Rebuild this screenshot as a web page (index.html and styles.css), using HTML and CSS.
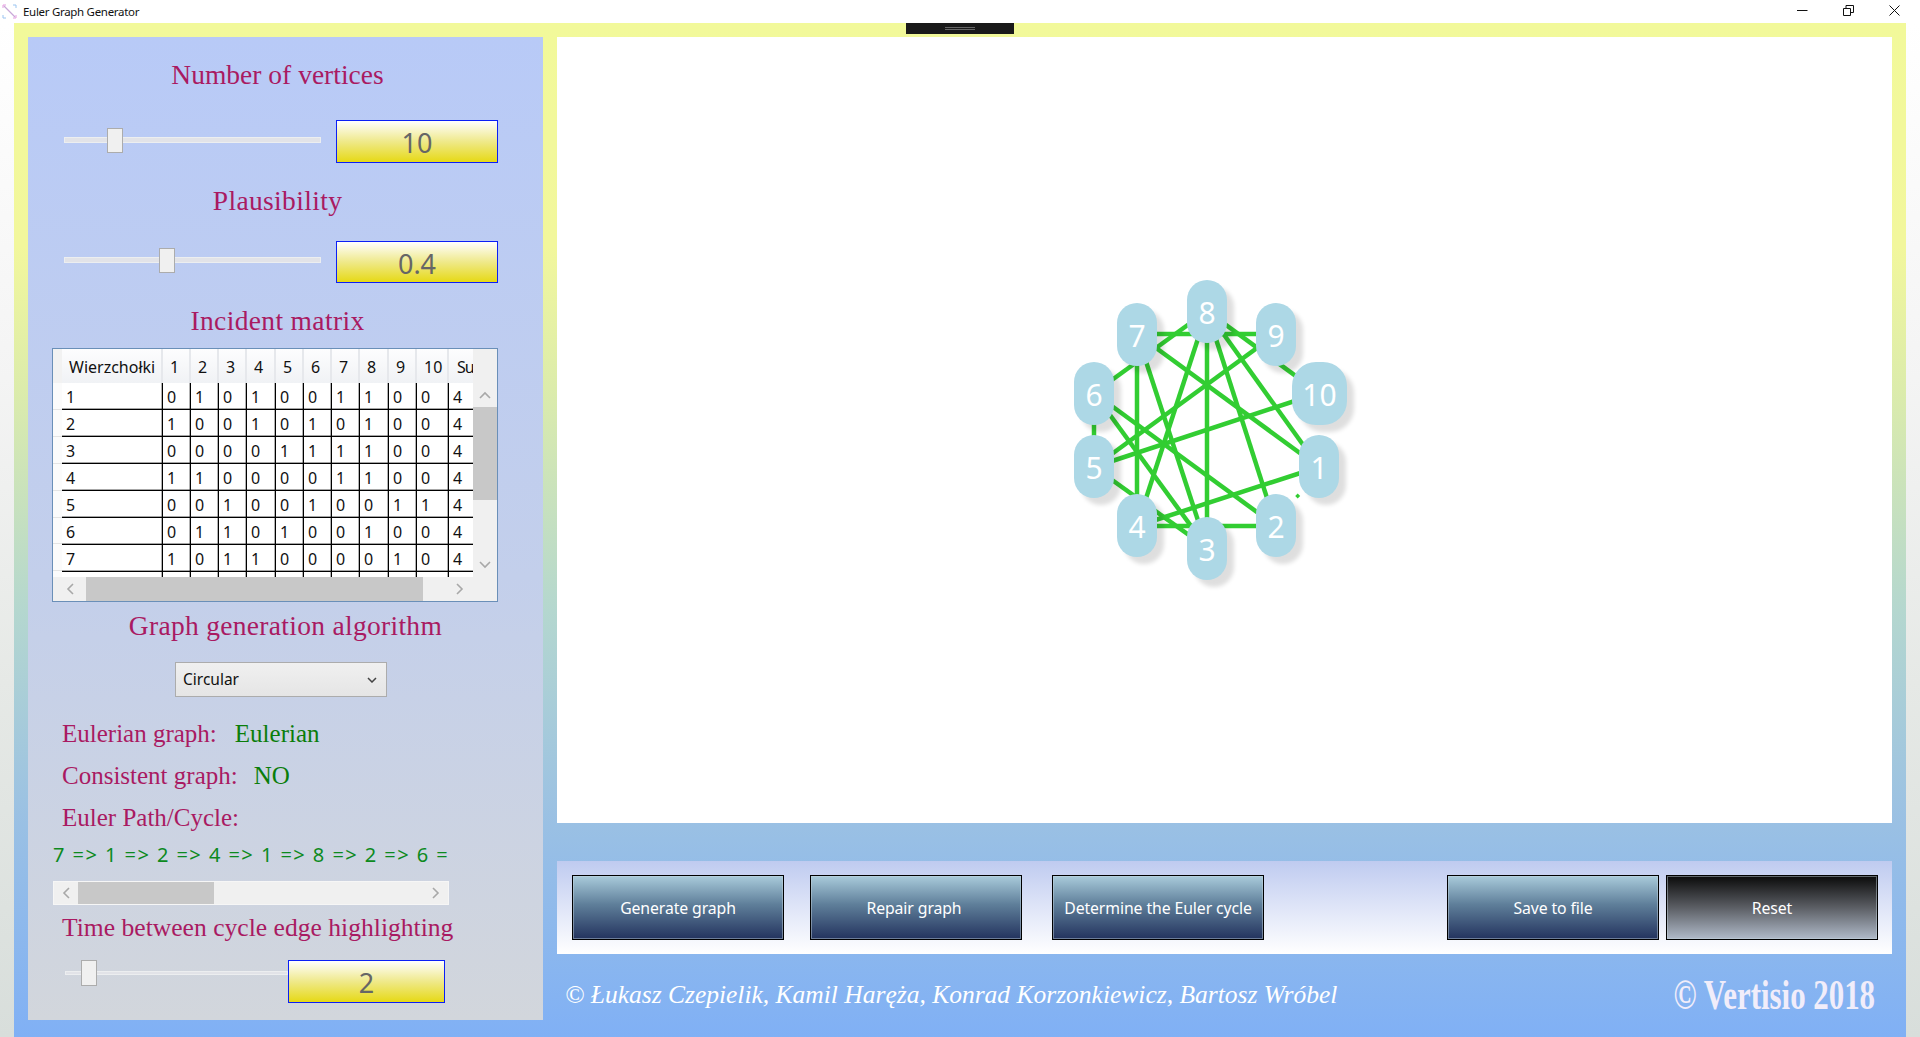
FILE: index.html
```html
<!DOCTYPE html>
<html lang="en">
<head>
<meta charset="utf-8">
<title>Euler Graph Generator</title>
<link rel="stylesheet" href="styles.css">
</head>
<body>
<header class="titlebar">
  <svg class="app-icon" viewBox="0 0 15 15"><path d="M1 1h3M1 1v3M14 14h-3M14 14v-3" stroke="#e59be0" fill="none"/><path d="M1 11v3h3M11 1h3v3" stroke="#9ac4f0" fill="none"/><path d="M2 2l11 11" stroke="#c8a8d8" stroke-width="1.2"/></svg>
  <span class="app-title">Euler Graph Generator</span>
  <div class="win-controls">
    <svg class="win-btn" viewBox="0 0 11 11"><path d="M0 5.5h10.500" stroke="#111"/></svg>
    <svg class="win-btn" viewBox="0 0 11 11"><path d="M.5 3.500h7v7h-7zM3 3.500v-3h7.500v7h-3" stroke="#111" fill="none"/></svg>
    <svg class="win-btn" viewBox="0 0 11 11"><path d="M.5.5l10 10M10.500.5l-10 10" stroke="#111"/></svg>
  </div>
</header>
<div class="window">
  <div class="strip"></div>
  <div class="stage">
    <div class="grab"><span class="grab-lines"></span></div>
    <aside class="panel">
      <h2 class="heading h-first">Number of vertices</h2>
      <div class="slider-row r-first">
        <div class="track"><span class="thumb t-vertices"></span></div>
        <div class="value">10</div>
      </div>
      <h2 class="heading h-next">Plausibility</h2>
      <div class="slider-row r-second">
        <div class="track"><span class="thumb t-plaus"></span></div>
        <div class="value">0.4</div>
      </div>
      <h2 class="heading h-next h-wide">Incident matrix</h2>
      <div class="grid-box">
        <div class="grid-top">
          <div class="row-strip"></div>
          <div class="grid-clip">
            <table class="matrix">
              <colgroup><col class="c-name"><col class="c-a"><col class="c-a"><col class="c-a"><col class="c-b"><col class="c-a"><col class="c-a"><col class="c-a"><col class="c-b"><col class="c-a"><col class="c-ten"><col class="c-sum"></colgroup>
              <thead><tr><th>Wierzchołki</th><th>1</th><th>2</th><th>3</th><th>4</th><th>5</th><th>6</th><th>7</th><th>8</th><th>9</th><th>10</th><th>Su</th></tr></thead>
              <tbody>
                <tr><td>1</td><td>0</td><td>1</td><td>0</td><td>1</td><td>0</td><td>0</td><td>1</td><td>1</td><td>0</td><td>0</td><td>4</td></tr>
                <tr><td>2</td><td>1</td><td>0</td><td>0</td><td>1</td><td>0</td><td>1</td><td>0</td><td>1</td><td>0</td><td>0</td><td>4</td></tr>
                <tr><td>3</td><td>0</td><td>0</td><td>0</td><td>0</td><td>1</td><td>1</td><td>1</td><td>1</td><td>0</td><td>0</td><td>4</td></tr>
                <tr><td>4</td><td>1</td><td>1</td><td>0</td><td>0</td><td>0</td><td>0</td><td>1</td><td>1</td><td>0</td><td>0</td><td>4</td></tr>
                <tr><td>5</td><td>0</td><td>0</td><td>1</td><td>0</td><td>0</td><td>1</td><td>0</td><td>0</td><td>1</td><td>1</td><td>4</td></tr>
                <tr><td>6</td><td>0</td><td>1</td><td>1</td><td>0</td><td>1</td><td>0</td><td>0</td><td>1</td><td>0</td><td>0</td><td>4</td></tr>
                <tr><td>7</td><td>1</td><td>0</td><td>1</td><td>1</td><td>0</td><td>0</td><td>0</td><td>0</td><td>1</td><td>0</td><td>4</td></tr>
                <tr><td></td><td></td><td></td><td></td><td></td><td></td><td></td><td></td><td></td><td></td><td></td><td></td></tr>
              </tbody>
            </table>
          </div>
          <div class="vbar">
            <div class="vbar-head"></div>
            <div class="vbar-btn"><svg class="chev" viewBox="0 0 12 8"><path d="M1 7l5-5 5 5"/></svg></div>
            <div class="vbar-thumb"></div>
            <div class="vbar-rest"></div>
            <div class="vbar-btn"><svg class="chev" viewBox="0 0 12 8"><path d="M1 1l5 5 5-5"/></svg></div>
          </div>
        </div>
        <div class="hbar hbar-grid">
          <div class="hbar-btn"><svg class="chev-h" viewBox="0 0 8 12"><path d="M7 1L2 6l5 5"/></svg></div>
          <div class="hbar-thumb th-grid"></div>
          <div class="hbar-rest"></div>
          <div class="hbar-btn"><svg class="chev-h" viewBox="0 0 8 12"><path d="M1 1l5 5-5 5"/></svg></div>
          <div class="hbar-corner"></div>
        </div>
      </div>
      <h2 class="heading h-algo">Graph generation algorithm</h2>
      <div class="select">
        <span>Circular</span>
        <svg class="sel-chev" viewBox="0 0 10 6"><path d="M1 1l4 4 4-4"/></svg>
      </div>
      <p class="status s-first"><span class="label">Eulerian graph:</span><span class="answer">Eulerian</span></p>
      <p class="status s-next"><span class="label">Consistent graph:</span><span class="answer a-no">NO</span></p>
      <p class="status s-next"><span class="label">Euler Path/Cycle:</span></p>
      <div class="path-clip">7 =&gt; 1 =&gt; 2 =&gt; 4 =&gt; 1 =&gt; 8 =&gt; 2 =&gt; 6 =</div>
      <div class="hbar hbar-path">
        <div class="hbar-btn"><svg class="chev-h" viewBox="0 0 8 12"><path d="M7 1L2 6l5 5"/></svg></div>
        <div class="hbar-thumb th-path"></div>
        <div class="hbar-rest"></div>
        <div class="hbar-btn"><svg class="chev-h" viewBox="0 0 8 12"><path d="M1 1l5 5-5 5"/></svg></div>
      </div>
      <h2 class="heading h-time">Time between cycle edge highlighting</h2>
      <div class="slider-row r-time">
        <div class="track thin"><span class="thumb t-time"></span></div>
        <div class="value v-time">2</div>
      </div>
    </aside>
    <main class="workspace">
      <section class="canvas">
        <svg class="edges" viewBox="0 0 1335 786">
          <line x1="580" y1="297" x2="719" y2="297"/>
          <line x1="650" y1="274" x2="537" y2="356"/>
          <line x1="580" y1="297" x2="762" y2="430"/>
          <line x1="650" y1="274" x2="762" y2="430"/>
          <line x1="650" y1="274" x2="719" y2="489"/>
          <line x1="650" y1="274" x2="650" y2="511"/>
          <line x1="650" y1="274" x2="580" y2="489"/>
          <line x1="719" y1="297" x2="537" y2="430"/>
          <line x1="762" y1="356" x2="537" y2="430"/>
          <line x1="580" y1="297" x2="650" y2="511"/>
          <line x1="580" y1="297" x2="580" y2="489"/>
          <line x1="537" y1="356" x2="719" y2="489"/>
          <line x1="537" y1="356" x2="650" y2="511"/>
          <line x1="537" y1="356" x2="537" y2="430"/>
          <line x1="537" y1="430" x2="650" y2="511"/>
          <line x1="762" y1="430" x2="580" y2="489"/>
          <line x1="580" y1="489" x2="719" y2="489"/>
          <line x1="650" y1="274" x2="762" y2="356"/>
          <polygon class="edge-dot" points="740.700,456.500 743.200,459 740.700,461.500 738.200,459"/>
        </svg>
        <div class="node n1">1</div>
        <div class="node n2">2</div>
        <div class="node n3">3</div>
        <div class="node n4">4</div>
        <div class="node n5">5</div>
        <div class="node n6">6</div>
        <div class="node n7">7</div>
        <div class="node n8">8</div>
        <div class="node n9">9</div>
        <div class="node n10">10</div>
      </section>
      <nav class="toolbar">
        <button class="btn">Generate graph</button>
        <button class="btn b-repair">Repair graph</button>
        <button class="btn b-euler">Determine the Euler cycle</button>
        <span class="spacer"></span>
        <button class="btn">Save to file</button>
        <button class="btn btn-reset">Reset</button>
      </nav>
      <footer class="credits">
        <span class="authors">© Łukasz Czepielik, Kamil Haręża, Konrad Korzonkiewicz, Bartosz Wróbel</span>
        <span class="brand">© Vertisio 2018</span>
      </footer>
    </main>
  </div>
  <div class="strip"></div>
</div>
</body>
</html>
```
FILE: styles.css
```css
* { box-sizing: border-box; }
html, body { margin: 0; padding: 0; }
body {
  width: 1920px;
  height: 1037px;
  overflow: hidden;
  background: #fff;
  font-family: "Noto Sans", sans-serif;
  display: flex;
  flex-direction: column;
}
.titlebar {
  height: 23px;
  flex: none;
  display: flex;
  align-items: center;
  padding-left: 2px;
  background: #fff;
}
.app-icon { width: 15px; height: 15px; margin-right: 6px; }
.app-title { font-size: 11.500px; letter-spacing: -.3px; color: #111; }
.win-controls { margin-left: auto; display: flex; gap: 35px; padding-right: 20px; margin-top: -3px; }
.win-btn { width: 11px; height: 11px; display: block; }

.window { flex: 1; display: flex; min-height: 0; }
.strip { width: 14px; flex: none; background: linear-gradient(#fff 0%, #f4f4f4 35%, #e6e9e6 65%, #d8dedb 100%); }
.stage {
  flex: 1;
  position: relative;
  display: flex;
  padding: 14px 14px 17px 14px;
  gap: 14px;
  background: linear-gradient(#f2f99a 0%, #f2f79c 22%, #dcecab 36%, #b4d7cf 58%, #9bc1e3 78%, #80b0f5 100%);
}
.grab { position: absolute; left: 892px; top: 0; width: 108px; height: 11px; background: #1a1a1a; display: flex; justify-content: center; padding-top: 4px; }
.grab-lines { display: block; width: 30px; height: 3px; border-top: 1px solid #666; border-bottom: 1px solid #666; }

.panel {
  width: 515px;
  flex: none;
  background: linear-gradient(#b8caf7 0%, #c3cfeb 55%, #d2d6dc 100%);
}
.heading {
  margin: 0;
  height: 30px;
  line-height: 30px;
  font-family: "Liberation Serif", serif;
  font-weight: 400;
  font-size: 27.500px;
  color: #a91a62;
  text-align: center;
  white-space: nowrap;
}
.h-first { margin-top: 23px; padding-right: 16px; }
.h-next { margin-top: 23px; padding-right: 16px; letter-spacing: .35px; }
.h-algo { margin-top: 9px; letter-spacing: .3px; }
.h-time { margin-top: 8px; text-align: left; padding-left: 34px; font-size: 25.600px; }

.slider-row { display: flex; align-items: flex-start; padding-left: 36px; }
.r-first { margin-top: 30px; height: 43px; }
.r-second { margin-top: 25px; height: 42px; }
.r-time { margin-top: 17px; height: 43px; padding-left: 37px; }
.track {
  position: relative;
  width: 257px;
  height: 6px;
  margin-top: 17px;
  margin-right: 15px;
  background: #e2e3e8;
  border: 1px solid #eceef0;
}
.r-second .track { margin-top: 16px; }
.track.thin { width: 223px; height: 4px; margin-top: 11px; margin-right: 0; }
.thumb {
  position: absolute;
  width: 16px;
  height: 25px;
  top: -10px;
  background: #f0f0f0;
  border: 1px solid #acacac;
}
.t-vertices { left: 42px; }
.t-plaus { left: 94px; }
.t-time { left: 15px; top: -12px; height: 26px; }
.value {
  width: 162px;
  height: 100%;
  border: 1px solid #0b1ff5;
  background: linear-gradient(#fff 0%, #efe98a 50%, #e6d916 100%);
  color: #666;
  font-size: 27px;
  line-height: 41px;
  padding-top: 1px;
  text-align: center;
}
.v-time { width: 157px; }

.grid-box {
  margin: 12px 0 0 24px;
  width: 446px;
  height: 254px;
  border: 1px solid #6a8fb8;
  background: #f0f0f0;
  display: flex;
  flex-direction: column;
}
.grid-top { display: flex; height: 228px; }
.row-strip {
  width: 9px;
  flex: none;
  background:
    linear-gradient(#f2f2f2, #f2f2f2) 0 0 / 100% 34px no-repeat,
    repeating-linear-gradient(#fbfbfb 0 25.900px, #e4e4e4 25.900px 26.900px) 0 34px;
}
.grid-clip { width: 411px; flex: none; overflow: hidden; background: #fff; }
.matrix { border-collapse: separate; border-spacing: 0; table-layout: fixed; width: 411px; font-size: 16px; color: #111; }
.c-name { width: 101px; }
.c-a { width: 28px; }
.c-b { width: 29px; }
.c-ten { width: 32px; }
.c-sum { width: 25px; }
.matrix th {
  height: 34px;
  padding: 2px 0 0 7px;
  font-weight: 400;
  text-align: left;
  background: linear-gradient(#fdfdfe, #f0f2f5);
  border-right: 2px solid #e6e8ec;
  white-space: nowrap;
}
.matrix th:last-child { border-right: 0; padding-left: 8px; letter-spacing: -1px; }
.matrix td {
  height: 26.900px;
  padding: 2px 0 0 4px;
  border-right: 1px solid #000;
  border-bottom: 1px solid #000;
  box-shadow: inset 0 -1px 0 rgba(0,0,0,.35), inset -1px 0 0 rgba(0,0,0,.3);
  line-height: 24px;
  background: #fff;
}
.matrix td:last-child { border-right: 0; box-shadow: inset 0 -1px 0 rgba(0,0,0,.35); }
.vbar { width: 24px; flex: none; display: flex; flex-direction: column; background: #f0f0f0; }
.vbar-head { height: 34px; flex: none; }
.vbar-btn { height: 24px; flex: none; display: flex; align-items: center; justify-content: center; }
.vbar-thumb { height: 93px; flex: none; background: #c8c8c8; }
.vbar-rest { flex: 1; }
.chev { width: 12px; height: 8px; fill: none; stroke: #a8a8a8; stroke-width: 1.600; }
.chev-h { width: 8px; height: 12px; fill: none; stroke: #a8a8a8; stroke-width: 1.600; }
.hbar { display: flex; align-items: stretch; background: #f0f0f0; height: 24px; }
.hbar-btn { width: 24px; flex: none; display: flex; align-items: center; justify-content: center; }
.hbar-grid .hbar-btn:first-child { width: 33px; }
.hbar-thumb { flex: none; background: #c8c8c8; }
.th-grid { width: 337px; }
.th-path { width: 136px; }
.hbar-rest { flex: 1; }
.hbar-corner { width: 25px; flex: none; }
.hbar-path { margin: 12px 0 0 25px; width: 396px; border: 1px solid #f6f6f6; }

.select {
  margin: 21px 0 0 147px;
  width: 212px;
  height: 35px;
  border: 1px solid #acacac;
  background: linear-gradient(#f0f0f0, #e5e5e5);
  display: flex;
  align-items: center;
  justify-content: space-between;
  padding: 0 9px 2px 7px;
  font-size: 15.500px;
  color: #111;
}
.sel-chev { width: 10px; height: 6px; margin-top: 2px; fill: none; stroke: #444; stroke-width: 1.500; }

.status {
  margin: 0;
  height: 30px;
  line-height: 30px;
  padding-left: 34px;
  font-family: "Liberation Serif", serif;
  font-size: 25px;
  white-space: nowrap;
}
.s-first { margin-top: 22px; }
.s-next { margin-top: 12px; }
.label { color: #a91a62; }
.answer { color: #0a7d0a; margin-left: 18px; }
.a-no { margin-left: 16px; }
.path-clip {
  margin: 8px 0 0 25px;
  width: 410px;
  height: 28px;
  line-height: 28px;
  overflow: hidden;
  white-space: nowrap;
  font-size: 20px;
  letter-spacing: 1.450px;
  color: #0c8a1e;
}

.workspace { flex: 1; min-width: 0; display: flex; flex-direction: column; }
.canvas {
  position: relative;
  height: 786px;
  flex: none;
  background: #fff;
}
.edges { position: absolute; left: 0; top: 0; width: 1335px; height: 786px; }
.edges line { stroke: #32cd32; stroke-width: 4.500; }
.edge-dot { fill: #32cd32; }
.node {
  position: absolute;
  width: 40px;
  height: 63px;
  border-radius: 20px;
  background: #add8e6;
  box-shadow: 7px 7px 4px rgba(0,0,0,.13);
  color: #fff;
  font-size: 30px;
  line-height: 66px;
  text-align: center;
}
.n1 { left: 742px; top: 398px; }
.n2 { left: 699px; top: 457px; }
.n3 { left: 630px; top: 480px; }
.n4 { left: 560px; top: 457px; }
.n5 { left: 517px; top: 398px; }
.n6 { left: 517px; top: 325px; }
.n7 { left: 560px; top: 266px; }
.n8 { left: 630px; top: 243px; }
.n9 { left: 699px; top: 266px; }
.n10 { left: 735px; top: 325px; width: 55px; border-radius: 24px; }

.toolbar {
  margin-top: 38px;
  height: 93px;
  flex: none;
  display: flex;
  align-items: flex-start;
  padding: 14px 14px 0 15px;
  gap: 26px;
  background: linear-gradient(#bfcbf0, #fff);
}
.b-euler { margin-left: 4px; }
.spacer { flex: 1; }
.btn {
  width: 212px;
  height: 65px;
  border: 1px solid #000;
  outline: 1px solid rgba(200,215,225,.45);
  outline-offset: -2px;
  background: linear-gradient(#a9cbdb 0%, #5f7f9a 45%, #23335e 100%);
  color: #fff;
  font-family: "Noto Sans", sans-serif;
  font-size: 15.800px;
  letter-spacing: -.1px;
  padding: 0;
}
.b-repair { padding-right: 4px; }
.btn + .btn-reset { margin-left: -19px; }
.btn-reset { background: linear-gradient(#0a0a0a 0%, #5b5e64 50%, #b0bac9 100%); }
.credits {
  flex: 1;
  display: flex;
  align-items: center;
  justify-content: space-between;
  padding: 15px 17px 0 8px;
}
.authors {
  font-family: "Liberation Serif", serif;
  font-style: italic;
  font-size: 25.500px;
  color: #fff;
  white-space: nowrap;
}
.brand {
  font-family: "Liberation Serif", serif;
  font-weight: 700;
  font-size: 42px;
  color: #f1edfa;
  white-space: nowrap;
  transform: scaleX(.735);
  transform-origin: right center;
}
```
